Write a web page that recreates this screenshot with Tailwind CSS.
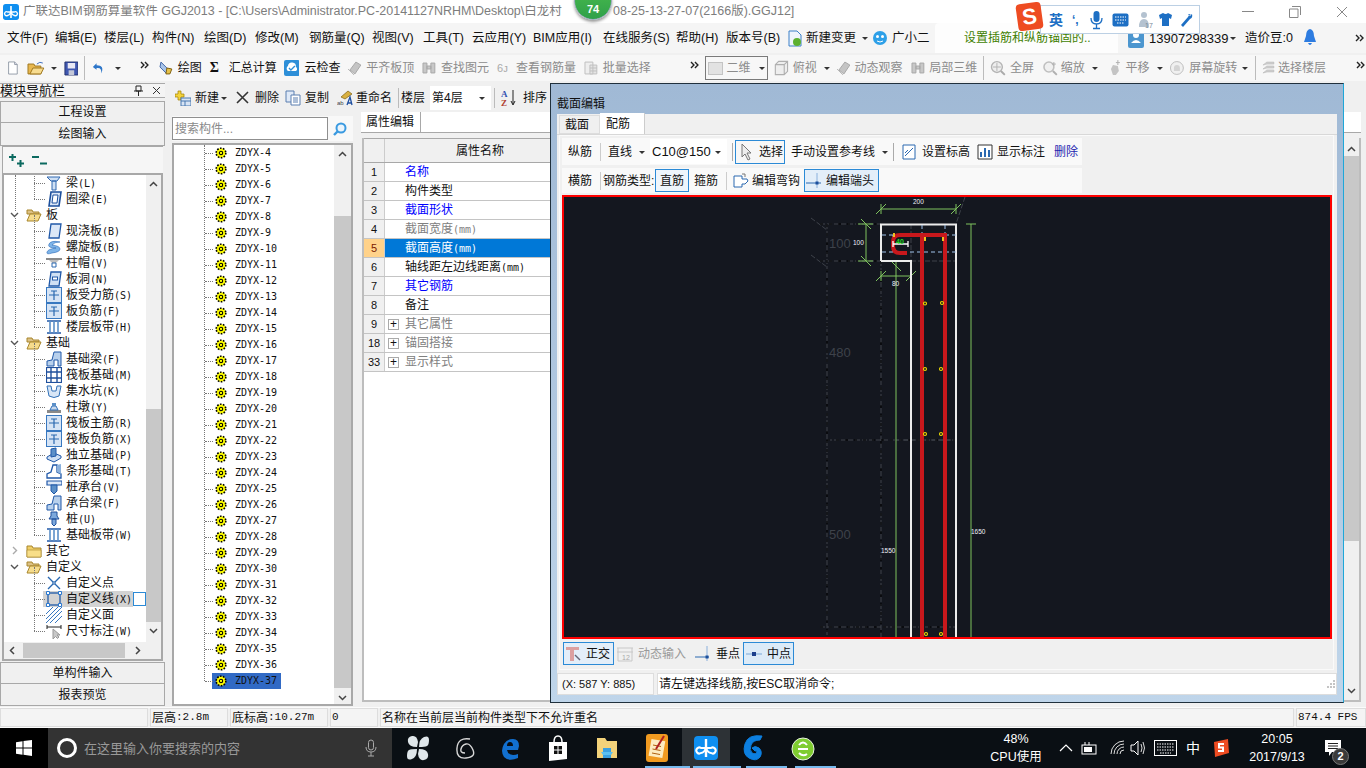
<!DOCTYPE html>
<html lang="zh">
<head>
<meta charset="UTF-8">
<title>广联达BIM钢筋算量软件 GGJ2013</title>
<script src="https://cdn.jsdelivr.net/npm/@tailwindcss/browser@4"></script>
</head>
<body class="m-0">
<svg class="hidden">
  <symbol id="chev" viewBox="0 0 8 8"><path d="M1 3l3 3 3-3z" fill="#333"/></symbol>
  <symbol id="more" viewBox="0 0 10 8"><path d="M1 1l3 3-3 3M5 1l3 3-3 3" fill="none" stroke="#222" stroke-width="1.4"/></symbol>
  <symbol id="i-new" viewBox="0 0 16 16"><path d="M3 1h7l3 3v11H3z" fill="#fff" stroke="#8a93a0"/><path d="M10 1v3h3" fill="#dde" stroke="#8a93a0"/></symbol>
  <symbol id="i-open" viewBox="0 0 18 16"><path d="M1 4h6l1 2h6v8H1z" fill="#e8b850" stroke="#a07820"/><path d="M3 14l3-6h11l-3 6z" fill="#f7dc90" stroke="#a07820"/><path d="M10 4q3-3 6-1" fill="none" stroke="#4070c0"/></symbol>
  <symbol id="i-save" viewBox="0 0 16 16"><path d="M1 1h14v14H1z" fill="#3f57b0" stroke="#22306c"/><path d="M4 2h8v6H4z" fill="#e8e8f4"/><path d="M5 10h6v5H5z" fill="#c4c8d8"/></symbol>
  <symbol id="i-undo" viewBox="0 0 16 16"><path d="M6 3L2 7l4 3V8q6-1 5 6 4-9-5-9z" fill="#2d76c9"/></symbol>
  <symbol id="i-draw" viewBox="0 0 16 16"><path d="M3 2l9 9-3 3-7-7z" fill="#a8c4e8" stroke="#4468a8"/><path d="M9 8l5 1-2 5-4 0z" fill="#e6c24a" stroke="#806010"/></symbol>
  <symbol id="i-cloud" viewBox="0 0 16 16"><rect x="0" y="0" width="16" height="16" rx="2" fill="#2e8fd8"/><path d="M4 11a3 3 0 0 1 0-5 4 4 0 0 1 8 1 2.200 2.200 0 0 1 0 4z" fill="#fff"/><path d="M5 8l2 2 4-4" fill="none" stroke="#2e8fd8" stroke-width="1.300"/></symbol>
  <symbol id="g-box" viewBox="0 0 16 16"><path d="M3 5l3-3h8v9l-3 3H3z M3 5h8v9 M11 5l3-3" fill="#eee" stroke="#b0b0b0"/></symbol>
  <symbol id="g-sw" viewBox="0 0 16 16"><path d="M3 10l6-8 5 3-6 9z" fill="#c4c4c4" stroke="#a8a8a8"/><path d="M1 9l6 6" stroke="#b8b8b8"/></symbol>
  <symbol id="g-bin" viewBox="0 0 16 16"><path d="M2 3h4v10H2zM10 3h4v10h-4zM6 6h4v3H6z" fill="#c8c8c8" stroke="#a8a8a8"/></symbol>
  <symbol id="g-stack" viewBox="0 0 16 16"><path d="M2 2h8v12H2z" fill="#eee" stroke="#c0c0c0"/><path d="M7 5h7v9H7z M7 8h7 M7 11h7 M10 5v9" fill="#e4e4e4" stroke="#c0c0c0"/></symbol>
  <symbol id="g-mag" viewBox="0 0 16 16"><circle cx="7" cy="7" r="5.500" fill="#eee" stroke="#b4b4b4" stroke-width="1.400"/><path d="M7 3v8M3 7h8" stroke="#b4b4b4"/><path d="M11 11l4 4" stroke="#aaa" stroke-width="2"/></symbol>
  <symbol id="g-zoom" viewBox="0 0 16 16"><circle cx="7" cy="7" r="5" fill="#f0f0f0" stroke="#c0c0c0" stroke-width="1.600"/><path d="M11 11l4 4" stroke="#b0b0b0" stroke-width="2"/><path d="M12 2v4M10 4h4" stroke="#b0b0b0"/></symbol>
  <symbol id="g-hand" viewBox="0 0 16 16"><path d="M4 9l2-4 5 1 1 5-3 4H6z" fill="#c4c4c4"/><path d="M11 0v5M9 2.500h4" stroke="#b0b0b0"/></symbol>
  <symbol id="g-rot" viewBox="0 0 16 16"><circle cx="8" cy="8" r="6.500" fill="#f0f0f0" stroke="#bdbdbd"/><path d="M5 8a3 3 0 0 1 6 0v3H5z" fill="#d4d4d4"/></symbol>
  <symbol id="g-floor" viewBox="0 0 16 16"><path d="M3 5l4-3h7v2H7zM3 9l4-3h7v2H7zM3 13l4-3h7v2H7z" fill="#d0d0d0" stroke="#b8b8b8" stroke-width=".6"/></symbol>
  <symbol id="i-plusbox" viewBox="0 0 16 16"><path d="M3 1h3v3h3v3H6v3H3V7H0V4h3z" fill="#f3d33c" stroke="#a08000" stroke-width=".7"/><rect x="6" y="8" width="10" height="8" fill="#d8e4f4" stroke="#4878b0"/><path d="M6 11h10M10 11v5" stroke="#4878b0"/></symbol>
  <symbol id="i-copy" viewBox="0 0 16 16"><path d="M1 1h8v11H1z" fill="#dfe9f7" stroke="#5b7eb0"/><path d="M6 5h9v10H6z" fill="#fff" stroke="#5b7eb0"/><path d="M8 8h5M8 10h5M8 12h5" stroke="#5b7eb0"/></symbol>
  <symbol id="i-rename" viewBox="0 0 16 16"><path d="M4 7l7-6 4 3-7 5z" fill="#d8b040" stroke="#806010" stroke-width=".7"/><text x="0" y="15" font-size="6" fill="#444" font-family="Liberation Sans">ab</text><path d="M10 15l3-8 2 8M11 13h3" fill="none" stroke="#2050a0" stroke-width="1.300"/></symbol>
  <symbol id="i-sort" viewBox="0 0 16 18"><text x="0" y="8" font-size="9" font-weight="700" fill="#3050b0" font-family="Liberation Serif">A</text><text x="0" y="17" font-size="9" font-weight="700" fill="#b04030" font-family="Liberation Serif">Z</text><path d="M12 1v14M10 12l2 4 2-4" fill="none" stroke="#222"/></symbol>
  <symbol id="i-folder" viewBox="0 0 16 14"><path d="M1 2h5l1 2h8v9H1z" fill="#f0cf68" stroke="#a8862c"/><path d="M1 6h14v7H1z" fill="#f8de88" stroke="#a8862c" stroke-width=".6"/></symbol>
  <symbol id="i-folder-o" viewBox="0 0 16 14"><path d="M1 2h5l1 2h6v2H1z" fill="#dcc184" stroke="#a8862c"/><path d="M1 13l3-7h11l-3 7z" fill="#f6dc8c" stroke="#a8862c"/></symbol>
  <symbol id="t-slab" viewBox="0 0 16 16"><path d="M3 15L5 1h10l-2 14z" fill="#dbe7f7" stroke="#2058a8" stroke-width="1.300"/></symbol>
  <symbol id="t-beam" viewBox="0 0 16 16"><path d="M1 2h13l-3 4H5zM6 6h4v9H6z" fill="#cfe0f4" stroke="#3068b0"/></symbol>
  <symbol id="t-ring" viewBox="0 0 16 16"><path d="M3 15L5 1h10l-2 14z" fill="#dbe7f7" stroke="#1c4f9c" stroke-width="1.600"/><path d="M6 12l1-8h5l-1 8z" fill="#fff" stroke="#1c4f9c"/></symbol>
  <symbol id="t-spiral" viewBox="0 0 16 16"><path d="M14 3Q5 1 3 5t7 4q-8 1-9 4t5 1q8-1 8-4T6 6q2-3 8-3z" fill="#7eb4e8" stroke="#2868b8" stroke-width=".6"/></symbol>
  <symbol id="t-cap" viewBox="0 0 16 16"><path d="M0 3h16v2H0z" fill="#8a8a8a"/><path d="M3 5h10L10 8H6z" fill="#c0c0c0"/><path d="M6 8h4v4H6z" fill="#fff" stroke="#2a68b0"/></symbol>
  <symbol id="t-hole" viewBox="0 0 16 16"><path d="M3 15L5 1h10l-2 14z" fill="#cfe0f4" stroke="#2058a8" stroke-width="1.300"/><rect x="6.500" y="6" width="5" height="3" fill="#fff" stroke="#2058a8"/></symbol>
  <symbol id="t-bar" viewBox="0 0 16 16"><rect x=".5" y=".5" width="15" height="15" fill="#d6e4f5" stroke="#3878c0"/><path d="M3 8h10M8 4v9M5 4h6" fill="none" stroke="#2868b0" stroke-width="1.200"/></symbol>
  <symbol id="t-band" viewBox="0 0 16 16"><path d="M1 2h14M1 14h14" stroke="#2058a8" stroke-width="1.400"/><path d="M4 2v12M8 2v12M12 2v12" stroke="#5c90c8" stroke-width="1.600"/></symbol>
  <symbol id="t-fbeam" viewBox="0 0 16 16"><path d="M1 15V10l5-1 2-8 7 0v14h-3V9H8v6z" fill="#b8d0ec" stroke="#2058a8"/></symbol>
  <symbol id="t-raft" viewBox="0 0 16 16"><rect x=".5" y=".5" width="15" height="15" fill="#fff" stroke="#20509c" stroke-width="1.200"/><path d="M1 5h14M1 11h14M5 1v14M11 1v14" stroke="#20509c" stroke-width="1.400"/></symbol>
  <symbol id="t-pit" viewBox="0 0 16 16"><path d="M1 3l4 0 1 5h4l1-5 4 0-2 10q-5 3-10 0z" fill="#d8e6f6" stroke="#3070b8"/></symbol>
  <symbol id="t-pier" viewBox="0 0 16 16"><path d="M1 11h14v3H1z" fill="#8a8a8a"/><path d="M4 11l2-4h4l2 4z" fill="#c8d8ec" stroke="#3070b8"/><path d="M6 4h4v3H6z" fill="#5c90c8"/></symbol>
  <symbol id="t-iso" viewBox="0 0 16 16"><path d="M1 10l7-4 7 3v2l-7 4-7-3z" fill="#cfe0f4" stroke="#2058a8"/><path d="M5 2l5-1v8l-5 1z" fill="#5c90c8" stroke="#2058a8"/></symbol>
  <symbol id="t-strip" viewBox="0 0 16 16"><path d="M1 15v-4l4-2 2-7h4v7l4 2v4z" fill="#fff" stroke="#2058a8" stroke-width="1.300"/><path d="M11 2l4-1v10l-4-2z" fill="#8ab0dc"/></symbol>
  <symbol id="t-pilecap" viewBox="0 0 16 16"><path d="M1 2h15v4H1z" fill="#dbe7f7" stroke="#2058a8" stroke-width="1.200"/><path d="M5 6h6v6l-3 3-3-3z" fill="#5c90c8" stroke="#2058a8"/></symbol>
  <symbol id="t-pile" viewBox="0 0 16 16"><path d="M5 1h6v4l2 3H3l2-3zM6 8h4v5l-2 2-2-2z" fill="#7ca8dc" stroke="#20509c"/></symbol>
  <symbol id="t-pt" viewBox="0 0 16 16"><path d="M2 2l12 12M14 2L2 14" stroke="#2a68b0" stroke-width="1.400"/><circle cx="8" cy="8" r="1.200" fill="#fff" stroke="#2a68b0"/></symbol>
  <symbol id="t-line" viewBox="0 0 16 16"><rect x="2" y="2" width="12" height="12" fill="none" stroke="#1f5aa8" stroke-width="1.300"/><path d="M.5.5h3v3h-3zM12.500.5h3v3h-3zM.5 12.500h3v3h-3zM12.500 12.500h3v3h-3z" fill="#fff" stroke="#2a78d0"/></symbol>
  <symbol id="t-face" viewBox="0 0 16 16"><path d="M0 7L7 0M0 12L12 0M0 16L16 0M4 16L16 4M9 16l7-7" stroke="#3878c0"/></symbol>
  <symbol id="t-dim" viewBox="0 0 16 16"><path d="M1 2v4M15 2v4M1 4h14" stroke="#222"/><path d="M7 6v10l2.500-2.500 2 2 1.500-1.500-2-2H14z" fill="#c8c8c8" stroke="#999"/></symbol>
  <symbol id="ic-gear" viewBox="0 0 12 12"><circle cx="6" cy="6" r="4.800" fill="#ff0" stroke="#000" stroke-width="1.600" stroke-dasharray="1.600 1.400"/><circle cx="6" cy="6" r="1.700" fill="#ff0" stroke="#000" stroke-width="1.100"/></symbol>
  <symbol id="i-logo" viewBox="0 0 24 24"><rect width="24" height="24" rx="4" fill="#0f8ff0"/><path d="M12 3v18" stroke="#fff" stroke-width="2.400"/><path d="M12 12H7a3 3 0 1 0 0 5q3 0 5-5 2 5 5 5a3 3 0 1 0 0-5z" fill="none" stroke="#fff" stroke-width="2"/></symbol>
</svg>

<div class="relative w-[1366px] h-[768px] overflow-hidden flex flex-col bg-[#f0f0f0] text-[12px] leading-none text-[#111] font-['Liberation_Sans','Noto_Sans_CJK_SC',sans-serif]">

  <!-- title bar -->
  <div class="h-[23px] bg-white flex items-center">
    <svg class="ml-[3px] w-[16px] h-[16px]"><use href="#i-logo"/></svg>
    <span class="ml-[4px] w-[550px] text-[12.5px] text-[#7d7d7d] whitespace-nowrap overflow-hidden">广联达BIM钢筋算量软件 GGJ2013 - [C:\Users\Administrator.PC-20141127NRHM\Desktop\白龙村</span>
    <span class="ml-[40px] text-[12.5px] text-[#7d7d7d] whitespace-nowrap">08-25-13-27-07(2166版).GGJ12]</span>
    <div class="ml-auto flex items-center text-[#808080]">
      <span class="w-[12px] h-px bg-[#888] mr-[35px]"></span>
      <svg class="w-[12px] h-[12px] mr-[35px]" viewBox="0 0 12 12"><path d="M3 .5h8.500V9M.5 3h8.500v8.500H.5z" fill="none" stroke="#888"/></svg>
      <svg class="w-[12px] h-[12px] mr-[18px]" viewBox="0 0 12 12"><path d="M1 1l10 10M11 1L1 11" stroke="#888"/></svg>
    </div>
  </div>

  <!-- menu bar -->
  <div class="h-[30px] bg-[#f5f5f5] flex items-center whitespace-nowrap text-[12.5px]">
    <span class="ml-[7px] w-[48px]">文件(F)</span><span class="w-[49px]">编辑(E)</span><span class="w-[48px]">楼层(L)</span><span class="w-[52px]">构件(N)</span><span class="w-[51px]">绘图(D)</span><span class="w-[54px]">修改(M)</span><span class="w-[63px]">钢筋量(Q)</span><span class="w-[51px]">视图(V)</span><span class="w-[49px]">工具(T)</span><span class="w-[61px]">云应用(Y)</span><span class="w-[70px]">BIM应用(I)</span><span class="w-[73px]">在线服务(S)</span><span class="w-[50px]">帮助(H)</span><span class="w-[62px]">版本号(B)</span>
    <svg class="w-[14px] h-[17px]" viewBox="0 0 14 17"><path d="M1 1h8l4 4v11H1z" fill="#eef4fc" stroke="#3d80c8"/><circle cx="9" cy="12" r="4" fill="#5cb030"/></svg>
    <span class="ml-[4px] w-[52px]">新建变更</span>
    <svg class="ml-[3px] w-[8px] h-[8px]"><use href="#chev"/></svg>
    <svg class="ml-[3px] w-[16px] h-[16px]" viewBox="0 0 16 16"><circle cx="8" cy="8" r="7" fill="#2ea0e8"/><circle cx="5.500" cy="6.500" r="1.500" fill="#fff"/><circle cx="10.500" cy="6.500" r="1.500" fill="#fff"/><path d="M5 11q3 2 6 0" stroke="#fff" fill="none"/></svg>
    <span class="ml-[4px] w-[36px]">广小二</span>
    <div class="ml-[7px] w-[183px] h-[30px] bg-white/80 rounded-t-[4px] flex items-center"><span class="ml-[29px] text-[12px] text-[#3f7f00]">设置插筋和纵筋锚固的..</span></div>
    <svg class="ml-[10px] w-[16px] h-[20px]" viewBox="0 0 16 20"><rect width="16" height="20" rx="2" fill="#4c96cf"/><circle cx="8" cy="7" r="3" fill="#fff"/><path d="M3 15q5-6 10 0z" fill="#fff"/></svg>
    <span class="ml-[5px] w-[80px] text-[13px]">13907298339</span>
    <svg class="w-[8px] h-[8px]"><use href="#chev"/></svg>
    <span class="ml-[8px] w-[58px]">造价豆:0</span>
    <svg class="w-[14px] h-[20px]" viewBox="0 0 14 20"><path d="M7 1q-4 1-4 7l-2 6h12l-2-6q0-6-4-7zM5 15q2 4 4 0z" fill="#2e7ce0"/></svg>
    <svg class="ml-[38px] w-[10px] h-[8px]"><use href="#more"/></svg>
  </div>

  <!-- main toolbar -->
  <div class="h-[30px] flex items-center whitespace-nowrap bg-[#f7f7f7] border-y-2 border-[#f0f0f0]">
    <svg class="ml-[6px] w-[14px] h-[16px]"><use href="#i-new"/></svg>
    <svg class="ml-[7px] w-[18px] h-[16px]"><use href="#i-open"/></svg>
    <svg class="ml-[5px] w-[8px] h-[8px]"><use href="#chev"/></svg>
    <svg class="ml-[6px] w-[15px] h-[15px]"><use href="#i-save"/></svg>
    <span class="ml-[6px] h-[24px] w-px bg-[#bbb]"></span>
    <svg class="ml-[6px] w-[15px] h-[16px]"><use href="#i-undo"/></svg>
    <svg class="ml-[8px] w-[8px] h-[8px]"><use href="#chev"/></svg>
    <svg class="ml-[18px] w-[10px] h-[8px] -mt-[6px]"><use href="#more"/></svg>
    <svg class="ml-[8px] w-[16px] h-[16px]"><use href="#i-draw"/></svg>
    <span class="ml-[4px] w-[24px]">绘图</span>
    <span class="ml-[8px] w-[12px] font-bold text-[14px] font-['Liberation_Serif']">Σ</span>
    <span class="ml-[7px] w-[48px]">汇总计算</span>
    <svg class="ml-[7px] w-[16px] h-[16px]"><use href="#i-cloud"/></svg>
    <span class="ml-[5px] w-[36px]">云检查</span>
    <svg class="ml-[7px] w-[16px] h-[16px]"><use href="#g-sw"/></svg>
    <span class="ml-[3px] w-[48px] text-[#8c8c8c]">平齐板顶</span>
    <svg class="ml-[7px] w-[16px] h-[16px]"><use href="#g-bin"/></svg>
    <span class="ml-[4px] w-[48px] text-[#8c8c8c]">查找图元</span>
    <span class="ml-[8px] w-[16px] text-[#aaa] text-[11px]">6ᴊ</span>
    <span class="ml-[3px] w-[60px] text-[#8c8c8c]">查看钢筋量</span>
    <svg class="ml-[7px] w-[16px] h-[16px]"><use href="#g-stack"/></svg>
    <span class="ml-[4px] w-[48px] text-[#8c8c8c]">批量选择</span>
    <svg class="ml-[39px] w-[10px] h-[8px] -mt-[6px]"><use href="#more"/></svg>
    <div class="ml-[5px] w-[64px] h-[24px] border border-[#7a7a7a] flex items-center">
      <span class="ml-[2px] w-[15px] h-[13px] bg-[#e2e2e2] border border-[#c4c4c4]"></span>
      <span class="ml-[4px] w-[28px] text-[#8c8c8c]">二维</span>
      <svg class="w-[8px] h-[8px] ml-[3px]"><use href="#chev"/></svg>
    </div>
    <svg class="ml-[4px] w-[18px] h-[18px]"><use href="#g-box"/></svg>
    <span class="ml-[3px] w-[24px] text-[#8c8c8c]">俯视</span>
    <svg class="ml-[6px] w-[8px] h-[8px]"><use href="#chev"/></svg>
    <svg class="ml-[5px] w-[16px] h-[16px]"><use href="#g-sw"/></svg>
    <span class="ml-[3px] w-[48px] text-[#8c8c8c]">动态观察</span>
    <svg class="ml-[8px] w-[16px] h-[16px]"><use href="#g-bin"/></svg>
    <span class="ml-[3px] w-[48px] text-[#8c8c8c]">局部三维</span>
    <span class="ml-[6px] h-[24px] w-px bg-[#bbb]"></span>
    <svg class="ml-[6px] w-[16px] h-[16px]"><use href="#g-mag"/></svg>
    <span class="ml-[4px] w-[24px] text-[#8c8c8c]">全屏</span>
    <svg class="ml-[8px] w-[16px] h-[16px]"><use href="#g-zoom"/></svg>
    <span class="ml-[3px] w-[24px] text-[#8c8c8c]">缩放</span>
    <svg class="ml-[6px] w-[8px] h-[8px]"><use href="#chev"/></svg>
    <svg class="ml-[8px] w-[16px] h-[16px]"><use href="#g-hand"/></svg>
    <span class="ml-[3px] w-[24px] text-[#8c8c8c]">平移</span>
    <svg class="ml-[6px] w-[8px] h-[8px]"><use href="#chev"/></svg>
    <svg class="ml-[6px] w-[16px] h-[16px]"><use href="#g-rot"/></svg>
    <span class="ml-[4px] w-[48px] text-[#8c8c8c]">屏幕旋转</span>
    <svg class="ml-[4px] w-[8px] h-[8px]"><use href="#chev"/></svg>
    <span class="ml-[6px] h-[24px] w-px bg-[#bbb]"></span>
    <svg class="ml-[4px] w-[16px] h-[16px]"><use href="#g-floor"/></svg>
    <span class="ml-[2px] w-[48px] text-[#8c8c8c]">选择楼层</span>
    <svg class="ml-[30px] w-[10px] h-[8px] -mt-[6px]"><use href="#more"/></svg>
  </div>

  <!-- work area -->
  <div class="h-[624px] flex">
    <!-- module nav -->
    <div class="w-[165px] flex flex-col">
      <div class="h-[15px] flex items-center text-[13px] border-t border-[#999] border-b border-[#aaa] bg-[#f4f4f4]">
        <span>模块导航栏</span>
        <svg class="ml-auto w-[9px] h-[11px]" viewBox="0 0 9 11"><path d="M2 1h5v5H2zM0 6h9M4.500 6v5" fill="none" stroke="#222"/></svg>
        <svg class="ml-[9px] mr-[4px] w-[9px] h-[9px]" viewBox="0 0 9 9"><path d="M1 1l7 7M8 1L1 8" stroke="#333"/></svg>
      </div>
      <div class="mt-[3px] h-[22px] bg-[#f0f0f0] border border-[#a8a8a8] flex items-center justify-center">工程设置</div>
      <div class="h-[23px] bg-[#f0f0f0] border border-[#a8a8a8] border-t-0 flex items-center justify-center">绘图输入</div>
      <div class="h-[27px] mx-[2px] bg-[#f6f6f6] flex items-center border-t border-l border-[#a8a8a8]">
        <svg class="ml-[5px] w-[17px] h-[15px]" viewBox="0 0 17 15"><path d="M1 4h7M4.500 1v7M9 10.500h7M12.500 7v7" stroke="#0c6a60" stroke-width="2"/></svg>
        <svg class="ml-[6px] w-[17px] h-[15px]" viewBox="0 0 17 15"><path d="M1 4h7M9 10.500h7" stroke="#0c6a60" stroke-width="2"/></svg>
      </div>
      <!-- project tree -->
      <div class="relative mx-[2px] w-[161px] h-[488px] bg-white border-2 border-[#a8a8a8] overflow-hidden">
        <div id="navTree" class="absolute left-0 top-0 w-[144px] h-[467px] overflow-hidden"></div>
        <div class="absolute right-0 top-0 w-[15px] h-[467px] bg-[#f0f0f0] flex flex-col">
          <svg class="mt-[6px] mx-auto w-[9px] h-[6px]" viewBox="0 0 9 6"><path d="M1 5l3.500-3.500L8 5" fill="none" stroke="#444" stroke-width="1.500"/></svg>
          <div class="mt-[222px] h-[213px] bg-[#c8c8c8]"></div>
          <svg class="mt-[6px] mx-auto w-[9px] h-[6px]" viewBox="0 0 9 6"><path d="M1 1l3.500 3.500L8 1" fill="none" stroke="#444" stroke-width="1.500"/></svg>
        </div>
        <div class="absolute left-0 bottom-0 w-full h-[17px] bg-[#f0f0f0] flex items-center">
          <svg class="ml-[5px] w-[6px] h-[9px]" viewBox="0 0 6 9"><path d="M5 1L1.500 4.500 5 8" fill="none" stroke="#444" stroke-width="1.500"/></svg>
          <div class="ml-[8px] w-[102px] h-[15px] bg-[#c8c8c8]"></div>
          <svg class="ml-[10px] w-[6px] h-[9px]" viewBox="0 0 6 9"><path d="M1 1l3.500 3.500L1 8" fill="none" stroke="#444" stroke-width="1.500"/></svg>
        </div>
      </div>
      <div class="h-[22px] mt-[1px] bg-[#f0f0f0] border border-[#a8a8a8] flex items-center justify-center">单构件输入</div>
      <div class="h-[22px] bg-[#f0f0f0] border border-[#a8a8a8] border-t-0 flex items-center justify-center">报表预览</div>
    </div>

    <div class="flex-1 flex flex-col ml-[7px]">
      <!-- component toolbar -->
      <div class="h-[27px] mt-[1px] flex items-center whitespace-nowrap">
        <svg class="ml-[3px] w-[16px] h-[16px]"><use href="#i-plusbox"/></svg>
        <span class="ml-[4px] w-[24px]">新建</span>
        <svg class="w-[8px] h-[8px] ml-[1px]"><use href="#chev"/></svg>
        <svg class="ml-[8px] w-[13px] h-[13px]" viewBox="0 0 13 13"><path d="M1 1l11 11M12 1L1 12" stroke="#333" stroke-width="1.600"/></svg>
        <span class="ml-[6px] w-[24px]">删除</span>
        <svg class="ml-[6px] w-[16px] h-[16px]"><use href="#i-copy"/></svg>
        <span class="ml-[4px] w-[24px]">复制</span>
        <svg class="ml-[8px] w-[16px] h-[16px]"><use href="#i-rename"/></svg>
        <span class="ml-[3px] w-[36px]">重命名</span>
        <span class="ml-[6px] h-[20px] w-px bg-[#bbb]"></span>
        <span class="ml-[2px] w-[24px]">楼层</span>
        <div class="ml-[5px] w-[61px] h-[24px] bg-white flex items-center"><span class="ml-[2px] w-[46px]">第4层</span><svg class="w-[8px] h-[8px]"><use href="#chev"/></svg></div>
        <span class="ml-[3px] h-[20px] w-px bg-[#bbb]"></span>
        <svg class="ml-[6px] w-[16px] h-[18px]"><use href="#i-sort"/></svg>
        <span class="ml-[6px] w-[24px]">排序</span>
      </div>
      <div class="flex-1 flex">
        <!-- component list -->
        <div class="w-[181px] flex flex-col">
          <div class="mt-[5px] h-[25px] flex items-center bg-[#f8f8f8]">
            <div class="w-[156px] h-[23px] bg-white border border-[#8f8f8f] flex items-center pl-[2px] text-[#8a8a8a]">搜索构件...</div>
            <svg class="ml-[5px] w-[14px] h-[14px]" viewBox="0 0 14 14"><circle cx="8" cy="6" r="4.500" fill="#eaf4fc" stroke="#3a9ae0" stroke-width="2"/><path d="M4.500 9.500L1 13" stroke="#3a9ae0" stroke-width="2.400"/></svg>
          </div>
          <div class="relative mt-[2px] h-[563px] bg-white border-2 border-[#a8a8a8] overflow-hidden">
            <div id="compTree" class="absolute left-0 top-0 w-[162px]"></div>
            <div class="absolute right-0 top-0 w-[17px] h-full bg-[#f0f0f0] flex flex-col">
              <svg class="mt-[6px] mx-auto w-[9px] h-[6px]" viewBox="0 0 9 6"><path d="M1 5l3.500-3.500L8 5" fill="none" stroke="#444" stroke-width="1.500"/></svg>
              <div class="mt-[59px] h-[472px] bg-[#c8c8c8]"></div>
              <svg class="mt-[7px] mx-auto w-[9px] h-[6px]" viewBox="0 0 9 6"><path d="M1 1l3.500 3.500L8 1" fill="none" stroke="#444" stroke-width="1.500"/></svg>
            </div>
          </div>
        </div>
        <!-- property table -->
        <div class="ml-[8px] flex-1 mr-[5px] flex flex-col">
          <div class="mt-[1px] h-[21px] flex border-b border-[#a8a8a8] bg-white">
            <div class="w-[60px] h-[20px] border-r border-[#a8a8a8] flex items-center pl-[5px]">属性编辑</div>
          </div>
          <div class="relative mt-[5px] h-[564px] bg-white border-l-2 border-r-2 border-b-2 border-[#bdbdbd] ml-[1px]">
            <div class="h-[25px] flex border-y border-[#a8a8a8] bg-[#f0f0f0]"><div class="w-[21px] border-r border-[#ccc]"></div><div class="flex-1 flex items-center pl-[71px]">属性名称</div></div>
            <div id="propRows"></div>
            <div class="absolute right-0 top-0 w-[15px] h-full bg-[#f0f0f0] flex flex-col">
              <svg class="mt-[8px] mx-auto w-[9px] h-[6px]" viewBox="0 0 9 6"><path d="M1 5l3.500-3.500L8 5" fill="none" stroke="#444" stroke-width="1.500"/></svg>
              <div class="mt-[4px] h-[385px] bg-[#c8c8c8]"></div>
              <svg class="mt-auto mb-[6px] mx-auto w-[9px] h-[6px]" viewBox="0 0 9 6"><path d="M1 1l3.500 3.500L8 1" fill="none" stroke="#444" stroke-width="1.500"/></svg>
            </div>
          </div>
        </div>
      </div>
    </div>
  </div>

  <!-- status bar -->
  <div class="h-[21px] flex text-[11px] bg-[#f0f0f0] border-y border-[#fbfbfb]">
    <div class="w-[148px] bg-[#f4f4f4] border border-[#ddd]"></div>
    <div class="ml-[2px] w-[78px] bg-[#f4f4f4] border border-[#ddd] flex items-center pl-[1px]"><span class="text-[12px]">层高</span><span class="font-['Liberation_Mono']">:2.8m</span></div>
    <div class="ml-[2px] w-[98px] bg-[#f4f4f4] border border-[#ddd] flex items-center pl-[1px]"><span class="text-[12px]">底标高</span><span class="font-['Liberation_Mono']">:10.27m</span></div>
    <div class="ml-[2px] w-[48px] bg-[#f4f4f4] border border-[#ddd] flex items-center pl-[1px] font-['Liberation_Mono']">0</div>
    <div class="ml-[2px] w-[914px] bg-[#f4f4f4] border border-[#ddd] flex items-center pl-[1px] text-[12px]">名称在当前层当前构件类型下不允许重名</div>
    <div class="ml-[2px] flex-1 bg-[#f4f4f4] border border-[#ddd] flex items-center pl-[1px] font-['Liberation_Mono']">874.4 FPS</div>
  </div>

  <!-- taskbar -->
  <div class="relative h-[40px] flex items-center bg-[#0a0f14] text-white">
    <div class="w-[48px] h-full bg-black flex items-center justify-center">
      <svg class="w-[16px] h-[16px]" viewBox="0 0 16 16"><path d="M0 2.200l6.500-1v6.300H0zM7.500 1l8.500-1v7.500H7.500zM0 8.500h6.500v6.300l-6.500-1zM7.500 8.500H16V16l-8.500-1.200z" fill="#fff"/></svg>
    </div>
    <div class="w-[344px] h-full bg-[#333] flex items-center">
      <span class="ml-[9px] w-[20px] h-[20px] rounded-full border-[3px] border-white"></span>
      <span class="ml-[7px] text-[#999] text-[13px]">在这里输入你要搜索的内容</span>
      <svg class="ml-auto mr-[15px] w-[12px] h-[18px]" viewBox="0 0 12 18"><rect x="3.500" y="1" width="5" height="10" rx="2.500" fill="none" stroke="#aaa"/><path d="M1 8q0 5 5 5t5-5M6 13v4M3 17h6" fill="none" stroke="#aaa"/></svg>
    </div>
    <svg class="ml-[15px] w-[22px] h-[26px]" viewBox="0 0 22 26"><g fill="#dfe6ea"><path d="M10 12Q2 12 1 7t4-6 6 6z"/><path d="M12 12q0-8 5-10t5 3-2 6-8 1z"/><path d="M10 14q0 8-5 10T0 21t2-6 8-1z"/><path d="M12 14q8 0 9 5t-4 6-6-6z"/></g></svg>
    <svg class="ml-[26px] w-[20px] h-[24px]" viewBox="0 0 20 24"><path d="M15 3Q3 1 2 12t9 10 7-8-7-6-5 5 4 4" fill="none" stroke="#d8d8d8" stroke-width="1.400"/></svg>
    <svg class="ml-[25px] w-[20px] h-[24px]" viewBox="0 0 20 24"><path d="M18 14H7q1 5 6 5 3 0 5-1v4q-9 4-14-1-4-6 0-13 3-5 9-5 6 0 6 7zM13 10q0-4-3-4t-3 4z" fill="#1270d0"/></svg>
    <svg class="ml-[28px] w-[20px] h-[26px]" viewBox="0 0 20 26"><path d="M1 7h18v17l-18 2z" fill="#fff"/><path d="M6 7q0-6 4-6t4 6" fill="none" stroke="#fff" stroke-width="1.500"/><path d="M6 11h3.500v3.500H6zM10.500 11H14v3.500h-3.500zM6 15.500h3.500V19H6zM10.500 15.500H14V19h-3.500z" fill="#111"/></svg>
    <svg class="ml-[28px] w-[22px] h-[24px]" viewBox="0 0 22 24"><path d="M1 2h8l2 3h10v17H1z" fill="#f2d27a"/><path d="M7 12h8v10H7z" fill="#3aa0e0"/><path d="M5 16h12l-2 3H7z" fill="#5cc0f0"/></svg>
    <svg class="ml-[27px] w-[24px] h-[30px]" viewBox="0 0 24 30"><rect x="1" y="1" width="22" height="28" rx="3" fill="#f09a20"/><rect x="5" y="7" width="14" height="17" fill="#fdebc0" transform="rotate(10 12 15)"/><path d="M8 12l8 1.500M7.500 16l8 1.500M7 20l8 1.500" stroke="#b06010"/><path d="M19 3l-8 13" stroke="#b02020" stroke-width="2"/></svg>
    <div class="ml-[13px] w-[48px] h-full bg-[#2d3236] flex items-center justify-center">
      <svg class="w-[24px] h-[24px]"><use href="#i-logo"/></svg>
    </div>
    <svg class="ml-[12px] w-[24px] h-[28px]" viewBox="0 0 24 28"><path d="M20 2Q6 0 3 10t4 14q7 4 11-1 3-5-1-9-4-3-7 0l3 3q2-1 2 1-1 3-5 1-3-3-1-8 2-5 9-5z" fill="#0c7fe0" stroke="#0c7fe0"/></svg>
    <svg class="ml-[25px] w-[24px] h-[28px]" viewBox="0 0 24 28"><circle cx="12" cy="15" r="11" fill="#7fcc30" stroke="#e8f0e0"/><path d="M7 15h10M8 11q4-5 8 0M8 19q4 4 8 1" fill="none" stroke="#fff" stroke-width="2"/></svg>
    <span class="absolute left-[645px] bottom-0 w-[45px] h-[2px] bg-[#76b9ed]"></span>
    <span class="absolute left-[693px] bottom-0 w-[48px] h-[2px] bg-[#76b9ed]"></span>
    <span class="absolute left-[746px] bottom-0 w-[41px] h-[2px] bg-[#76b9ed]"></span>
    <span class="absolute left-[795px] bottom-0 w-[41px] h-[2px] bg-[#76b9ed]"></span>
    <div class="ml-auto flex items-center">
      <div class="w-[60px] flex flex-col items-center gap-[5px] text-[12.5px]"><span>48%</span><span class="whitespace-nowrap">CPU使用</span></div>
      <svg class="ml-[13px] w-[14px] h-[10px]" viewBox="0 0 14 10"><path d="M1 8l6-6 6 6" fill="none" stroke="#fff" stroke-width="1.200"/></svg>
      <svg class="ml-[8px] w-[17px] h-[14px]" viewBox="0 0 17 14"><rect x="1" y="4" width="14" height="9" fill="none" stroke="#fff"/><rect x="3" y="6" width="8" height="5" fill="#fff"/><path d="M4 1v3M8 1v3" stroke="#fff"/></svg>
      <svg class="ml-[12px] w-[16px] h-[16px]" viewBox="0 0 16 16"><path d="M1 14a13 13 0 0 1 13-13M4 14a10 10 0 0 1 10-10M7 14a7 7 0 0 1 7-7M10 14a4 4 0 0 1 4-4" fill="none" stroke="#ddd"/></svg>
      <svg class="ml-[4px] w-[16px] h-[16px]" viewBox="0 0 16 16"><path d="M1 5h3l4-4v14l-4-4H1z" fill="none" stroke="#fff"/><path d="M11 4q2 4 0 8M13 2q3 6 0 12" fill="none" stroke="#ddd"/></svg>
      <svg class="ml-[8px] w-[23px] h-[16px]" viewBox="0 0 23 16"><rect x=".5" y=".5" width="22" height="15" fill="none" stroke="#fff"/><path d="M3 4h17M3 7h17M3 10h17M6 13h11" stroke="#fff" stroke-dasharray="1.500 1"/></svg>
      <span class="ml-[9px] w-[14px] text-[14px]">中</span>
      <svg class="ml-[13px] w-[16px] h-[18px]" viewBox="0 0 16 18"><path d="M1 3l14-3 1 14-14 4z" fill="#ee4c22"/><path d="M11 5H6v3.500h4V12H5" fill="none" stroke="#fff" stroke-width="2"/></svg>
      <div class="ml-[10px] w-[76px] flex flex-col items-center gap-[5px] text-[12.5px]"><span>20:05</span><span>2017/9/13</span></div>
      <div class="relative ml-[10px] w-[41px] h-[40px]">
        <svg class="absolute left-0 top-[12px] w-[16px] h-[16px]" viewBox="0 0 16 16"><path d="M0 0h16v12H7l-3 4v-4H0z" fill="#fff"/><path d="M3 3.500h10M3 6h10M3 8.500h10" stroke="#222"/></svg>
        <span class="absolute left-[7px] top-[20px] w-[17px] h-[17px] rounded-full bg-[#3a3a3a] border border-[#777] flex items-center justify-center text-[11px] font-bold">2</span>
      </div>
    </div>
  </div>

  <!-- section editor dialog -->
  <div class="absolute left-[550px] top-[83px] w-[794px] h-[620px] bg-gradient-to-b from-[#a0b9d5] to-[#bfd5ea] border border-[#20303c] border-r-[#1ea7d8] flex flex-col px-[6px]">
    <div class="h-[30px] flex items-end pb-[4px]">截面编辑</div>
    <div class="w-[780px] h-[581px] bg-[#f0f0f0] flex flex-col">
      <div class="h-[21px] flex items-end border-b border-[#d8d8d8] pl-[2px]">
        <div class="w-[41px] h-[19px] bg-[#f0f0f0] border border-[#ddd] flex items-center pl-[5px]">截面</div>
        <div class="w-[45px] h-[21px] bg-white border-r border-[#ccc] flex items-center pl-[6px]">配筋</div>
      </div>
      <div class="ml-[2px] w-[775px] h-[535px] border border-[#fafafa]">
        <div class="mt-[2px] ml-[2px] h-[27px] w-[520px] bg-white/60 flex items-center whitespace-nowrap">
          <span class="ml-[6px] w-[24px]">纵筋</span>
          <span class="ml-[8px] h-[18px] w-px bg-[#ccc]"></span>
          <span class="ml-[7px] w-[24px]">直线</span>
          <svg class="ml-[6px] w-[8px] h-[8px]"><use href="#chev"/></svg>
          <div class="ml-[4px] w-[77px] h-[25px] bg-white flex items-center"><span class="ml-[2px] w-[62px] text-[13px]">C10@150</span><svg class="w-[8px] h-[8px]"><use href="#chev"/></svg></div>
          <span class="ml-[5px] h-[18px] w-px bg-[#aaa]"></span>
          <div class="ml-[2px] w-[50px] h-[24px] bg-[#f7f7f7] border border-[#2b8ad6] flex items-center">
            <svg class="ml-[4px] w-[14px] h-[18px]" viewBox="0 0 14 18"><path d="M2 1v13l3-3 3 6 2-1-3-6h4z" fill="#eee" stroke="#777"/></svg>
            <span class="ml-[5px] w-[24px]">选择</span>
          </div>
          <span class="ml-[6px] w-[84px]">手动设置参考线</span>
          <svg class="ml-[6px] w-[8px] h-[8px]"><use href="#chev"/></svg>
          <span class="ml-[4px] h-[18px] w-px bg-[#aaa]"></span>
          <svg class="ml-[7px] w-[16px] h-[16px]" viewBox="0 0 16 16"><path d="M2 1h12v14H2z" fill="#fff" stroke="#2a68b0"/><path d="M4 12l8-8M4 9l3-3" stroke="#2a68b0"/></svg>
          <span class="ml-[5px] w-[48px]">设置标高</span>
          <svg class="ml-[7px] w-[16px] h-[16px]" viewBox="0 0 16 16"><path d="M1 1h14v14H1z" fill="#fff" stroke="#333"/><path d="M4 13V8M8 13V4M12 13V6" stroke="#2a68b0" stroke-width="2"/></svg>
          <span class="ml-[4px] w-[48px]">显示标注</span>
          <span class="ml-[9px] w-[24px] text-[#1f1fb0]">删除</span>
        </div>
        <div class="mt-[3px] ml-[2px] h-[25px] w-[520px] flex items-center bg-white/60 whitespace-nowrap">
          <span class="ml-[6px] w-[24px]">横筋</span>
          <span class="ml-[8px] h-[18px] w-px bg-[#ccc]"></span>
          <span class="ml-[2px] w-[50px]">钢筋类型:</span>
          <div class="ml-[2px] w-[34px] h-[23px] bg-[#eef5fb] border border-[#2b8ad6] flex items-center justify-center">直筋</div>
          <span class="ml-[5px] w-[24px]">箍筋</span>
          <span class="ml-[8px] h-[18px] w-px bg-[#ccc]"></span>
          <svg class="ml-[6px] w-[16px] h-[16px]" viewBox="0 0 16 16"><path d="M1 3h8v3h5l1 2-3 3H9v3H1z" fill="#fff" stroke="#2a68b0"/><path d="M9 1h3v3" fill="none" stroke="#777"/></svg>
          <span class="ml-[3px] w-[48px]">编辑弯钩</span>
          <div class="ml-[4px] w-[75px] h-[23px] bg-[#e3eef9] border border-[#2b8ad6] flex items-center">
            <svg class="ml-[1px] w-[16px] h-[15px]" viewBox="0 0 16 15"><path d="M0 10h15" stroke="#2a68b0"/><path d="M11 0v15" stroke="#8ab0dc"/><rect x="9.500" y="8.500" width="3" height="3" fill="#1c4f9c"/></svg>
            <span class="ml-[4px] w-[48px]">编辑端头</span>
          </div>
        </div>
        <!-- drawing -->
        <div class="mt-[2px] ml-[2px] w-[770px] h-[444px] bg-[#14171f] border-2 border-[#ff0000]">
          <svg class="block" width="766" height="440" viewBox="564 197 766 440" font-family="Liberation Sans">
            <g stroke="#3e424a" fill="none">
              <path d="M820 224h61M820 261h135M827 224v413M811 218l16 12M811 255l16 12M827 440h130M820 627h140M881 261v376M896 440h60M911 224v40M965 197l-9 27" stroke-dasharray="5 2"/>
            </g>
            <path d="M827 224v413M881 261v376M827 440h130M820 627h140M820 224h61M820 261h60" stroke="#000" stroke-dasharray="3 6" fill="none"/>
            <g fill="#3e424a" font-size="13"><text x="829" y="248">100</text><text x="829" y="357">480</text><text x="829" y="539">500</text></g>
            <g stroke="#7fc35f" fill="none">
              <path d="M881 209h75M881 204v10M956 204v10M876 214l10-10M951 214l10-10"/>
              <path d="M866 224v37M858 224h15M858 261h15M861 219l10 10M861 256l10 10"/>
              <path d="M881 276h30M881 271v10M911 271v10M876 281l10-10M906 281l10-10"/>
              <path d="M896 261v376M971 224v413M966 224h10M891 261l10 10" />
            </g>
            <path d="M881 261V224.500h75V637M881 261h30V637" fill="none" stroke="#ececec" stroke-width="2"/>
            <path d="M882 235h74M882 252h74M922 225v10M945 225v10M893 235v17" fill="none" stroke="#a0c4ec" stroke-dasharray="4 3"/>
            <path d="M945 637V235H900q-7 0-7 7v4q0 7 7 7h7M922 637V235" fill="none" stroke="#c8181c" stroke-width="4"/>
            <path d="M893 244h15M893 241v6M908 241v6" stroke="#fff" stroke-width="1.300"/>
            <text x="896" y="244" fill="#22dd22" font-size="7" font-weight="700">40</text>
            <g fill="#eef2fa" font-size="6.500"><text x="913" y="204">200</text><text x="853" y="245">100</text><text x="892" y="286">80</text><text x="881" y="553">1550</text><text x="971" y="534">1650</text></g>
            <g fill="none" stroke="#f0dc00" stroke-width="1.100">
              <circle cx="925" cy="303.500" r="1.500"/><circle cx="942" cy="303" r="1.500"/><circle cx="925" cy="369" r="1.500"/><circle cx="941" cy="369" r="1.500"/><circle cx="925" cy="434" r="1.500"/><circle cx="941" cy="434" r="1.500"/><circle cx="926" cy="634" r="1.500"/><circle cx="941" cy="634" r="1.500"/>
            </g>
            <path d="M894 233v4M925 237v4M943 237v4" stroke="#f0c020" stroke-width="2"/>
          </svg>
        </div>
        <div class="mt-[2px] ml-[2px] h-[25px] flex items-center whitespace-nowrap">
          <div class="ml-[1px] w-[51px] h-[23px] bg-[#e3eef9] border border-[#2b8ad6] flex items-center">
            <svg class="ml-[2px] w-[16px] h-[16px]" viewBox="0 0 16 16"><path d="M0 1h13v3H8v11H4V4H0z" fill="#dca0a0"/><path d="M9 9l5 5" stroke="#667" stroke-width="1.400"/></svg>
            <span class="ml-[4px] w-[24px]">正交</span>
          </div>
          <svg class="ml-[3px] w-[16px] h-[16px]" viewBox="0 0 16 16"><path d="M0 2h16M0 6h16M1 2v13h14V2" fill="none" stroke="#c8c8c8"/><text x="5" y="14" font-size="7" fill="#aaa">12</text></svg>
          <span class="ml-[5px] w-[48px] text-[#999]">动态输入</span>
          <svg class="ml-[9px] w-[16px] h-[15px]" viewBox="0 0 16 15"><path d="M0 11h14" stroke="#2a68b0"/><path d="M12 0v15" stroke="#8ab0dc"/><rect x="10.500" y="9.500" width="3" height="3" fill="#1c4f9c"/></svg>
          <span class="ml-[5px] w-[24px]">垂点</span>
          <div class="ml-[3px] w-[51px] h-[23px] bg-[#dcebf8] border border-[#2b8ad6] flex items-center">
            <svg class="ml-[2px] w-[16px] h-[8px]" viewBox="0 0 16 8"><path d="M0 4h16" stroke="#7aa8d8"/><rect x="6" y="2" width="4" height="4" fill="#1c3f8c"/></svg>
            <span class="ml-[5px] w-[24px]">中点</span>
          </div>
        </div>
      </div>
      <div class="mt-[3px] h-[22px] flex">
        <div class="w-[97px] bg-[#f8f8f8] border border-[#ddd] flex items-center pl-[4px] text-[11px]">(X: 587 Y: 885)</div>
        <div class="ml-[3px] flex-1 bg-white border border-[#ddd] flex items-center pl-[1px]">请左键选择线筋,按ESC取消命令;
          <svg class="ml-auto w-[10px] h-[10px]" viewBox="0 0 10 10"><path d="M7 1h2v2H7zM4 4h2v2H4zM7 4h2v2H7zM1 7h2v2H1zM4 7h2v2H4zM7 7h2v2H7z" fill="#c4c4c4"/></svg>
        </div>
      </div>
    </div>
  </div>

  <!-- floating badge and input method bar -->
  <div class="absolute left-[574px] top-[-18px] w-[38px] h-[38px] rounded-full bg-gradient-to-b from-[#4cbf4c] to-[#2fa04a] border border-[#9ab] shadow-[0_2px_3px_#0006] flex items-end justify-center pb-[4px] text-white text-[11px] font-bold">74</div>
  <div class="absolute left-[1040px] top-[5px] w-[160px] h-[29px] bg-white border border-[#bcd0e4] flex items-center">
    <span class="ml-[8px] text-[14px] font-bold text-[#1d6fc4]">英</span>
    <span class="ml-[9px] text-[12px] font-bold text-[#1d6fc4]">‘,</span>
    <svg class="ml-[11px] w-[13px] h-[20px]" viewBox="0 0 13 20"><rect x="3.500" y="1" width="6" height="11" rx="3" fill="#1d6fc4"/><path d="M1 8q0 6 5.500 6T12 8M6.500 14v4M3 18.500h7" fill="none" stroke="#1d6fc4" stroke-width="1.300"/></svg>
    <svg class="ml-[9px] w-[17px] h-[14px]" viewBox="0 0 17 14"><rect x=".5" y=".5" width="16" height="13" rx="2" fill="#1d6fc4"/><path d="M3 4h11M3 7h11M5 10h7" stroke="#fff" stroke-dasharray="1.500 1"/></svg>
    <svg class="ml-[9px] w-[15px] h-[18px]" viewBox="0 0 15 18"><circle cx="6" cy="4" r="3" fill="#b4c2d0"/><path d="M1 16q0-8 5-8t5 8z" fill="#b4c2d0"/><text x="7" y="17" font-size="7" fill="#789">17</text></svg>
    <svg class="ml-[5px] w-[15px] h-[15px]" viewBox="0 0 15 15"><path d="M5 1L1 3l1 4 2-1v8h7V6l2 1 1-4-4-2q-2 2-5 0z" fill="#1d6fc4"/></svg>
    <svg class="ml-[5px] w-[15px] h-[16px]" viewBox="0 0 15 16"><path d="M14 2q-3 0-4 3l-7 8 2 2 7-8q3-1 2-5l-2 2-2-2z" fill="#1d6fc4"/></svg>
  </div>
  <div class="absolute left-[1017px] top-[3px] w-[25px] h-[27px] bg-[#ee4c22] rounded-[4px] -rotate-[8deg] flex items-center justify-center text-white text-[22px] font-bold">S</div>
</div>

<script>
// tree + table rows
const navItems = [
  [1,'t-beam','梁','(L)',0],[1,'t-ring','圈梁','(E)',0],
  [0,'o','板','',0],
  [1,'t-slab','现浇板','(B)',0],[1,'t-spiral','螺旋板','(B)',0],[1,'t-cap','柱帽','(V)',0],[1,'t-hole','板洞','(N)',0],[1,'t-bar','板受力筋','(S)',0],[1,'t-bar','板负筋','(F)',0],[1,'t-band','楼层板带','(H)',0],
  [0,'o','基础','',0],
  [1,'t-fbeam','基础梁','(F)',0],[1,'t-raft','筏板基础','(M)',0],[1,'t-pit','集水坑','(K)',0],[1,'t-pier','柱墩','(Y)',0],[1,'t-bar','筏板主筋','(R)',0],[1,'t-bar','筏板负筋','(X)',0],[1,'t-iso','独立基础','(P)',0],[1,'t-strip','条形基础','(T)',0],[1,'t-pilecap','桩承台','(V)',0],[1,'t-fbeam','承台梁','(F)',0],[1,'t-pile','桩','(U)',0],[1,'t-band','基础板带','(W)',0],
  [0,'c','其它','',0],[0,'o','自定义','',0],
  [1,'t-pt','自定义点','',0],[1,'t-line','自定义线','(X)',1],[1,'t-face','自定义面','',0],[1,'t-dim','尺寸标注','(W)',0]
];
document.getElementById('navTree').innerHTML = '<span class="absolute left-[11px] top-0 h-[364px] border-l border-dotted border-[#777]"></span>' + navItems.map(([lv,ic,name,key,sel],i) => {
  const y = i*16;
  if (lv === 0) {
    const chev = ic === 'o'
      ? '<svg class="absolute left-[6px] top-[5px] w-[9px] h-[6px] bg-white" viewBox="0 0 9 6"><path d="M1 1l3.500 3.500L8 1" fill="none" stroke="#555" stroke-width="1.400"/></svg>'
      : '<svg class="absolute left-[8px] top-[3px] w-[6px] h-[9px] bg-white" viewBox="0 0 6 9"><path d="M1 1l3.500 3.500L1 8" fill="none" stroke="#aaa" stroke-width="1.400"/></svg>';
    return `<div class="absolute left-0 w-full h-[16px]" style="top:${y}px">${chev}<svg class="absolute left-[22px] top-[1px] w-[16px] h-[14px]"><use href="#${ic === 'o' ? 'i-folder-o' : 'i-folder'}"/></svg><span class="absolute left-[42px] top-[2px]">${name}</span></div>`;
  }
  return `<div class="absolute left-0 w-full h-[16px]" style="top:${y}px">
    ${sel ? '<span class="absolute left-[39px] top-0 w-[90px] h-[16px] bg-[#d3d3d3]"></span><span class="absolute left-[129px] top-[1px] w-[13px] h-[14px] bg-white border border-[#2b8ad6]"></span>' : ''}
    <span class="absolute left-[30px] top-[-8px] h-[16px] border-l border-dotted border-[#777]"></span>
    <span class="absolute left-[30px] top-[8px] w-[11px] border-t border-dotted border-[#777]"></span>
    <svg class="absolute left-[42px] top-0 w-[16px] h-[16px]"><use href="#${ic}"/></svg>
    <span class="absolute left-[62px] top-[2px] whitespace-nowrap">${name}<span class="text-[10px] font-['DejaVu_Sans_Mono']">${key}</span></span>
  </div>`;
}).join('');

let comps = '<span class="absolute left-[30px] top-0 h-[536px] border-l border-dotted border-[#777]"></span>';
for (let n = 4; n <= 37; n++) {
  const sel = n === 37;
  comps += `<div class="relative h-[16px]">
    ${sel ? '<span class="absolute left-[38px] top-0 w-[69px] h-[16px] bg-[#316ac5]"></span>' : ''}
    <span class="absolute left-[31px] top-[8px] w-[8px] border-t border-dotted border-[#777]"></span>
    <svg class="absolute left-[41px] top-[2px] w-[12px] h-[12px]"><use href="#ic-gear"/></svg>
    <span class="absolute left-[61px] top-[3px] text-[10px] font-['DejaVu_Sans_Mono']">ZDYX-${n}</span>
  </div>`;
}
document.getElementById('compTree').innerHTML = comps;

const props = [
  ['1','名称','blue'],['2','构件类型','black'],['3','截面形状','blue'],['4','截面宽度','gray','(mm)'],['5','截面高度','sel','(mm)'],
  ['6','轴线距左边线距离','black','(mm)'],['7','其它钢筋','blue'],['8','备注','black'],['9','其它属性','group'],['18','锚固搭接','group'],['33','显示样式','group']
];
const propColor = {blue:'text-[#0000ff]',black:'text-[#111]',gray:'text-[#808080]',sel:'bg-[#0078d7] text-white',group:'text-[#808080]'};
document.getElementById('propRows').innerHTML = props.map(([num,name,kind,unit]) => `
  <div class="h-[19px] flex border-b border-[#c4c4c4] whitespace-nowrap">
    <div class="w-[21px] flex items-center justify-center border-r border-[#ccc] text-[11px] ${kind === 'sel' ? 'bg-[#ffd28a] text-[#7a1a00]' : 'bg-[#f0f0f0]'}">${num}</div>
    <div class="flex-1 flex items-center ${propColor[kind]}">
      ${kind === 'group' ? '<span class="ml-[3px] w-[11px] h-[11px] border border-[#aaa] flex items-center justify-center text-[#111] text-[12px]">+</span><span class="ml-[6px]">' : '<span class="ml-[20px]">'}${name}<span class="text-[10px] font-[\'DejaVu_Sans_Mono\']">${unit || ''}</span></span>
    </div>
  </div>`).join('');
</script>
</body>
</html>
